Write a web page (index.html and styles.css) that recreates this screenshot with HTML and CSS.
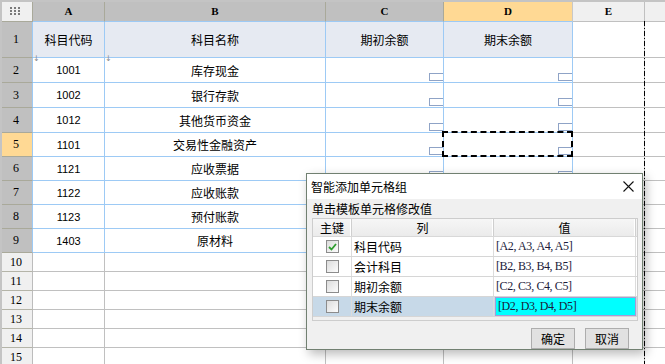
FILE: index.html
```html
<!DOCTYPE html>
<html lang="zh-CN">
<head>
    <meta charset="UTF-8">
    <title>智能添加单元格组</title>
    <link rel="stylesheet" href="styles.css">
</head>
<body>
    <div class="sheet">
        <div class="row head">
            <div class="corner">
                <svg width="10" height="8" viewBox="0 0 10 8">
                    <g fill="#7a7a7a">
                        <rect x="0" y="0" width="2" height="2"/><rect x="4" y="0" width="2" height="2"/><rect x="8" y="0" width="2" height="2"/>
                        <rect x="0" y="3" width="2" height="2"/><rect x="4" y="3" width="2" height="2"/><rect x="8" y="3" width="2" height="2"/>
                        <rect x="0" y="6" width="2" height="2"/><rect x="4" y="6" width="2" height="2"/><rect x="8" y="6" width="2" height="2"/>
                    </g>
                </svg>
            </div>
            <div class="ch">A</div>
            <div class="ch">B</div>
            <div class="ch">C</div>
            <div class="ch ch-sel">D</div>
            <div class="ch ch-off">E</div>
            <div class="ch ch-rest"></div>
        </div>

        <div class="row r1">
            <div class="rh">1</div>
            <div class="c title">科目代码</div>
            <div class="c title">科目名称</div>
            <div class="c title">期初余额</div>
            <div class="c title">期末余额</div>
            <div class="e"></div>
            <div class="x"></div>
        </div>

        <div class="row r25">
            <div class="rh">2</div>
            <div class="c num"><span class="arrow">↓</span>1001</div>
            <div class="c cn"><span class="arrow">↓</span>库存现金</div>
            <div class="c"><span class="mark"></span></div>
            <div class="c"><span class="mark"></span></div>
            <div class="e"></div>
            <div class="x"></div>
        </div>
        <div class="row r25">
            <div class="rh">3</div>
            <div class="c num">1002</div>
            <div class="c cn">银行存款</div>
            <div class="c"><span class="mark"></span></div>
            <div class="c"><span class="mark"></span></div>
            <div class="e"></div>
            <div class="x"></div>
        </div>
        <div class="row r25">
            <div class="rh">4</div>
            <div class="c num">1012</div>
            <div class="c cn">其他货币资金</div>
            <div class="c"><span class="mark"></span></div>
            <div class="c"><span class="mark"></span></div>
            <div class="e"></div>
            <div class="x"></div>
        </div>
        <div class="row r24">
            <div class="rh rh-sel">5</div>
            <div class="c num">1101</div>
            <div class="c cn">交易性金融资产</div>
            <div class="c"><span class="mark"></span></div>
            <div class="c"><span class="mark"></span><span class="marquee"></span></div>
            <div class="e"></div>
            <div class="x"></div>
        </div>
        <div class="row r24">
            <div class="rh">6</div>
            <div class="c num">1121</div>
            <div class="c cn">应收票据</div>
            <div class="c"><span class="mark"></span></div>
            <div class="c"><span class="mark"></span></div>
            <div class="e"></div>
            <div class="x"></div>
        </div>
        <div class="row r24">
            <div class="rh">7</div>
            <div class="c num">1122</div>
            <div class="c cn">应收账款</div>
            <div class="c"><span class="mark"></span></div>
            <div class="c"><span class="mark"></span></div>
            <div class="e"></div>
            <div class="x"></div>
        </div>
        <div class="row r24">
            <div class="rh">8</div>
            <div class="c num">1123</div>
            <div class="c cn">预付账款</div>
            <div class="c"><span class="mark"></span></div>
            <div class="c"><span class="mark"></span></div>
            <div class="e"></div>
            <div class="x"></div>
        </div>
        <div class="row r24">
            <div class="rh">9</div>
            <div class="c num">1403</div>
            <div class="c cn">原材料</div>
            <div class="c"><span class="mark"></span></div>
            <div class="c"><span class="mark"></span></div>
            <div class="e"></div>
            <div class="x"></div>
        </div>

        <div class="row r19"><div class="rh rh-off">10</div><div class="g"></div><div class="g"></div><div class="g"></div><div class="g"></div><div class="e"></div><div class="x"></div></div>
        <div class="row r19"><div class="rh rh-off">11</div><div class="g"></div><div class="g"></div><div class="g"></div><div class="g"></div><div class="e"></div><div class="x"></div></div>
        <div class="row r19"><div class="rh rh-off">12</div><div class="g"></div><div class="g"></div><div class="g"></div><div class="g"></div><div class="e"></div><div class="x"></div></div>
        <div class="row r19"><div class="rh rh-off">13</div><div class="g"></div><div class="g"></div><div class="g"></div><div class="g"></div><div class="e"></div><div class="x"></div></div>
        <div class="row r19"><div class="rh rh-off">14</div><div class="g"></div><div class="g"></div><div class="g"></div><div class="g"></div><div class="e"></div><div class="x"></div></div>
        <div class="row r19"><div class="rh rh-off">15</div><div class="g"></div><div class="g"></div><div class="g"></div><div class="g"></div><div class="e"></div><div class="x"></div></div>

        <div class="page-break"></div>
    </div>

    <div class="dialog">
        <div class="dialog-title">
            <span>智能添加单元格组</span>
            <svg class="close" width="11" height="11" viewBox="0 0 11 11">
                <path d="M0.5 0.5 L10.5 10.5 M10.5 0.5 L0.5 10.5" stroke="#111" stroke-width="1.1" fill="none"/>
            </svg>
        </div>
        <div class="dialog-body">
            <div class="hint">单击模板单元格修改值</div>
            <div class="grid">
                <div class="grid-row grid-head">
                    <div class="gc">主键</div>
                    <div class="gc">列</div>
                    <div class="gc">值</div>
                </div>
                <div class="grid-row">
                    <div class="gc"><span class="check on">
                        <svg width="9" height="8" viewBox="0 0 9 8"><path d="M1 4 L3.5 6.5 L8 1" stroke="#2f9e2f" stroke-width="1.8" fill="none"/></svg>
                    </span></div>
                    <div class="gc name">科目代码</div>
                    <div class="gc val">[A2, A3, A4, A5]</div>
                </div>
                <div class="grid-row">
                    <div class="gc"><span class="check"></span></div>
                    <div class="gc name">会计科目</div>
                    <div class="gc val">[B2, B3, B4, B5]</div>
                </div>
                <div class="grid-row">
                    <div class="gc"><span class="check"></span></div>
                    <div class="gc name">期初余额</div>
                    <div class="gc val">[C2, C3, C4, C5]</div>
                </div>
                <div class="grid-row active">
                    <div class="gc"><span class="check"></span></div>
                    <div class="gc name">期末余额</div>
                    <div class="gc val editing">[D2, D3, D4, D5]</div>
                </div>
            </div>
            <div class="buttons">
                <button class="btn">确定</button>
                <button class="btn">取消</button>
            </div>
        </div>
    </div>
</body>
</html>
```

FILE: styles.css
```css
* {
    box-sizing: border-box;
}

html, body {
    margin: 0;
    height: 100%;
    overflow: hidden;
}

body {
    background: #c4c4c4;
    padding: 2px 0 0 2px;
    font-family: "Noto Sans CJK SC", sans-serif;
    font-size: 12px;
    color: #000;
}

.sheet {
    position: relative;
    background: #fff;
    height: 100%;
}

.row {
    display: grid;
    grid-template-columns: 31px 72px 221px 118px 129px 72px 1fr;
}

.head { height: 20px; }
.r1 { height: 36px; }
.r25 { height: 25px; }
.r24 { height: 24px; }
.r19 { height: 19px; }

/* column header */
.corner {
    background: #f0f0f0;
    border: 1px solid #a9a99a;
    border-left: none;
    border-top: none;
    display: flex;
    align-items: center;
    justify-content: center;
    padding-right: 4px;
    padding-bottom: 2px;
}

.ch {
    background: #c0c0c0;
    border-right: 1px solid #a9a99a;
    border-bottom: 1px solid #9dcaf5;
    font-family: "Liberation Serif", serif;
    font-weight: bold;
    font-size: 11px;
    text-align: center;
    line-height: 19px;
}

.ch-sel {
    background: #ffd994;
    border-right-color: #c8c8c8;
}

.ch-off {
    background: #f0f0f0;
    border-right-color: #c0c0c0;
    border-bottom-color: #c0c0c0;
}

.ch-rest {
    background: #f0f0f0;
    border-right: none;
    border-bottom-color: #c0c0c0;
}

/* row header */
.rh {
    background: #c0c0c0;
    border-right: 1px solid #9dcaf5;
    border-bottom: 1px solid #a9a99a;
    font-family: "Liberation Serif", serif;
    font-size: 12px;
    display: flex;
    align-items: center;
    justify-content: center;
    padding-right: 2px;
}

.rh-sel {
    background: #ffd994;
}

.rh-off {
    background: #f0f0f0;
    border-right-color: #bcbcbc;
    border-bottom-color: #b4b4a8;
}

/* cells */
.c {
    position: relative;
    border-right: 1px solid #9dcaf5;
    border-bottom: 1px solid #9dcaf5;
    display: flex;
    align-items: center;
    justify-content: center;
}

.r1 .c {
    background: #e6eaf2;
}

.title {
    font-size: 12px;
    padding-bottom: 1px;
}

.num {
    font-family: "Liberation Sans", sans-serif;
    font-size: 11px;
}

.cn {
    font-size: 12px;
}

.g, .e {
    border-right: 1px solid #c0c0c0;
    border-bottom: 1px solid #c0c0c0;
}

.x {
    border-bottom: 1px solid #c0c0c0;
}

.arrow {
    position: absolute;
    left: 0;
    top: -4px;
    font-size: 8px;
    color: #8a8a8a;
    font-family: "DejaVu Sans", sans-serif;
}

.mark {
    position: absolute;
    right: 0;
    bottom: 1px;
    width: 14px;
    height: 8px;
    border: 1px solid #8fa3c6;
    border-right: none;
}

.marquee {
    position: absolute;
    left: -2px;
    top: -2px;
    right: -1px;
    bottom: -1px;
    border: 2px dashed #000;
}

.page-break {
    position: absolute;
    left: 642px;
    top: 19px;
    bottom: 0;
    width: 1px;
    background: repeating-linear-gradient(to bottom, #000 0 5px, transparent 5px 7px, #000 7px 8px, transparent 8px 10px);
}

/* dialog */
.dialog {
    position: absolute;
    left: 306px;
    top: 173px;
    width: 337px;
    height: 177px;
    border: 1px solid #718071;
    background: #f0f0f0;
    box-shadow: 3px 4px 10px rgba(0, 0, 0, 0.28);
}

.dialog-title {
    height: 25px;
    background: #fff;
    display: flex;
    align-items: center;
    justify-content: space-between;
    padding: 0 8px 0 4px;
    font-size: 12px;
}

.close {
    display: block;
}

.dialog-body {
    padding: 0 4px 0 5px;
}

.hint {
    height: 19px;
    line-height: 19px;
    font-size: 12px;
}

.grid {
    border: 1px solid #cdcdcd;
    background: #f0f0f0;
    padding-bottom: 3px;
    width: 326px;
}

.grid-row {
    display: grid;
    grid-template-columns: 39px 142px 142px;
    height: 20px;
    background: #fff;
    border-bottom: 1px solid #d6d6d6;
}

.grid-head {
    height: 18px;
    background: linear-gradient(#f6f6f6, #ebebeb);
    border-bottom: 1px solid #d8d8d8;
}

.grid-head .gc {
    justify-content: center;
    border-right: 1px solid #cfcfcf;
    box-shadow: inset -1px 0 0 #fff;
    font-size: 12px;
}

.gc {
    display: flex;
    align-items: center;
    border-right: 1px solid #dcdcdc;
    overflow: hidden;
}

.gc:first-child {
    justify-content: center;
}

.name {
    padding-left: 2px;
    font-size: 12px;
}

.val {
    padding-left: 2px;
    font-family: "Liberation Serif", serif;
    font-size: 12px;
    letter-spacing: -0.4px;
    color: #1b1b3a;
}

.active {
    background: #c7d9e8;
}

.editing {
    background: #00ffff;
    border: 1px solid #a59bd6;
    margin: 0 0 0 1px;
}

.check {
    width: 13px;
    height: 13px;
    border: 1px solid #8c8c8c;
    background: linear-gradient(135deg, #dcdcdc, #fdfdfd);
    display: flex;
    align-items: center;
    justify-content: center;
}

.buttons {
    display: flex;
    justify-content: flex-end;
    gap: 10px;
    padding: 7px 9px 0 0;
}

.btn {
    width: 44px;
    height: 21px;
    padding: 0;
    border: 1px solid #adadad;
    background: #e1e1e1;
    font-family: "Noto Sans CJK SC", sans-serif;
    font-size: 12px;
    color: #000;
}
```
